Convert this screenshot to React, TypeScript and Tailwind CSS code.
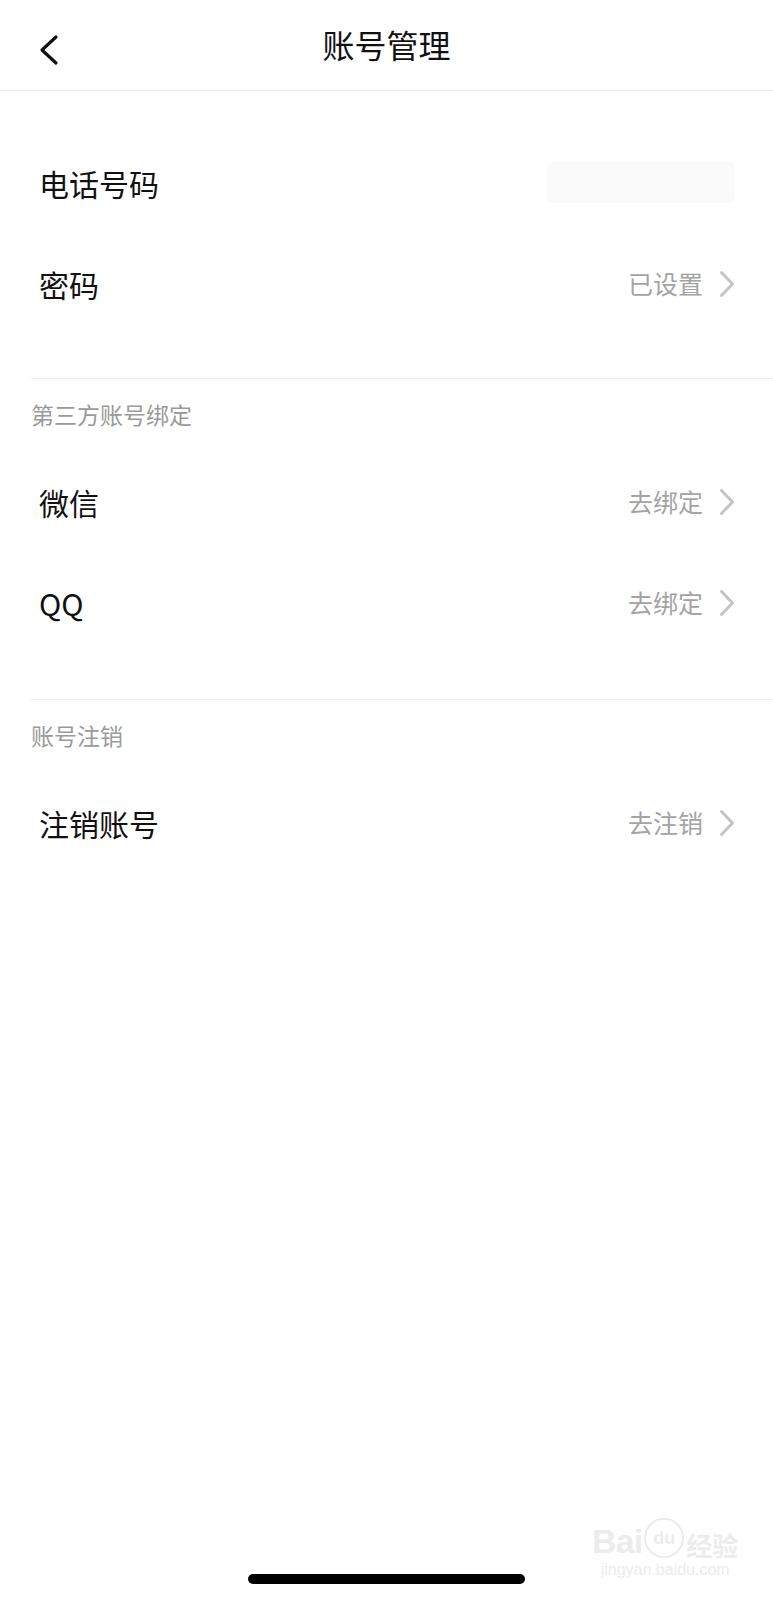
import React from 'react';

const font = { fontFamily: '"Noto Sans CJK SC", "Noto Sans", sans-serif' };

const ChevronRight = () => (
  <svg width="16" height="28" viewBox="0 0 16 28" fill="none" className="ml-[16px] shrink-0">
    <path d="M2.5 2.5 L13.5 14 L2.5 25.5" stroke="#c4c4c4" strokeWidth="3" strokeLinecap="round" strokeLinejoin="round" />
  </svg>
);

const Row = ({ label, value, chevron = true }: { label: string; value?: string; chevron?: boolean }) => (
  <div className="flex items-center justify-between h-[101px] pl-[39px] pr-[38px]">
    <span className="text-[30px] text-[#111] leading-none">{label}</span>
    {value ? (
      <div className="flex items-center">
        <span className="text-[25px] text-[#a3a3a3] leading-none">{value}</span>
        {chevron && <ChevronRight />}
      </div>
    ) : (
      <div className="w-[188px] h-[41px] rounded-md bg-[#fafafa]" />
    )}
  </div>
);

const SectionLabel = ({ children }: { children: React.ReactNode }) => (
  <div className="pl-[31px] pt-[20px] pb-[22px]">
    <div className="h-[30px] flex items-center text-[23px] text-[#9a9a9a] leading-none">{children}</div>
  </div>
);

export default function App() {
  return (
    <div className="relative w-[773px] h-[1600px] bg-white overflow-hidden" style={font}>
      {/* header */}
      <header className="relative h-[91px] flex items-center justify-center border-b border-[#ededed]">
        <svg width="24" height="32" viewBox="0 0 24 32" fill="none" className="absolute left-[37px] top-[34px]">
          <path d="M19 3 L5 16 L19 29" stroke="#111" strokeWidth="3.2" strokeLinecap="round" strokeLinejoin="round" />
        </svg>
        <h1 className="text-[32px] text-[#111] leading-none font-normal -mt-[2px]">账号管理</h1>
      </header>

      {/* account */}
      <section className="pt-[41px] pb-[44px]">
        <Row label="电话号码" />
        <Row label="密码" value="已设置" />
      </section>

      <div className="ml-[30px] h-px bg-[#efefef]" />

      <section className="pb-[46px]">
        <SectionLabel>第三方账号绑定</SectionLabel>
        <Row label="微信" value="去绑定" />
        <Row label="QQ" value="去绑定" />
      </section>

      <div className="ml-[30px] h-px bg-[#efefef]" />

      <section>
        <SectionLabel>账号注销</SectionLabel>
        <Row label="注销账号" value="去注销" />
      </section>

      {/* watermark */}
      <div className="absolute left-[592px] top-[1518px] flex flex-col items-center text-[#ececec] select-none">
        <div className="flex items-end gap-[2px]">
          <span className="text-[34px] leading-none font-bold tracking-tight" style={{ fontFamily: '"Liberation Sans", sans-serif' }}>Bai</span>
          <span className="w-[40px] h-[40px] rounded-full border-2 border-[#ececec] flex items-center justify-center text-[18px] leading-none font-bold" style={{ fontFamily: '"Liberation Sans", sans-serif' }}>du</span>
          <span className="text-[26px] leading-none font-bold">经验</span>
        </div>
        <span className="text-[16px] leading-none mt-[4px]" style={{ fontFamily: '"Liberation Sans", sans-serif' }}>jingyan.baidu.com</span>
      </div>

      {/* home indicator */}
      <div className="absolute left-[248px] top-[1574px] w-[277px] h-[10px] rounded-full bg-black" />
    </div>
  );
}
